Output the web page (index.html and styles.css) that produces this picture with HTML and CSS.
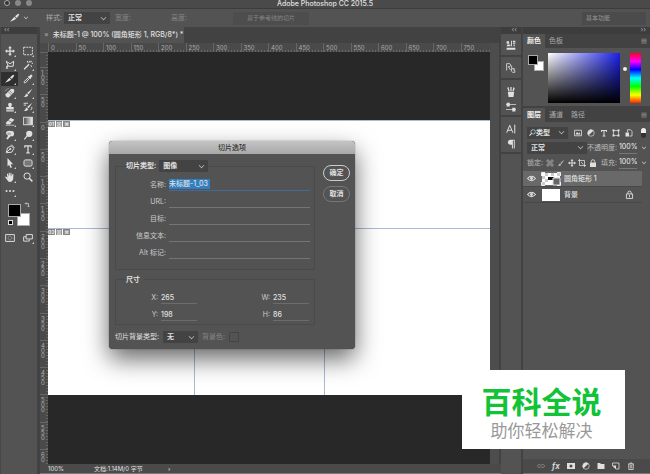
FILE: index.html
```html
<!DOCTYPE html>
<html lang="zh-CN">

<head>
  <meta charset="UTF-8">
  <meta name="viewport" content="width=device-width, initial-scale=1.0">
  <title>Adobe Photoshop CC 2015.5</title>
  <link rel="stylesheet" href="styles.css">
</head>

<body>
  <!-- 图标 -->
  <svg class="sprite" aria-hidden="true">
    <symbol id="i-move" viewBox="0 0 16 16"><path d="M8 0l3 3.500H9V7h3.500V5L16 8l-3.500 3V9H9v3.500h2L8 16l-3-3.500h2V9H3.500v2L0 8l3.500-3v2H7V3.500H5z" /></symbol>
    <symbol id="i-marquee" viewBox="0 0 16 16"><rect x="1" y="2" width="14" height="12" fill="none" stroke="currentColor" stroke-width="1.600" stroke-dasharray="3 1.500" /></symbol>
    <symbol id="i-lasso" viewBox="0 0 16 16"><path d="M2 14L5 9 2 2l6 4 6-4-1 8H6a2 2 0 1 0-1 3" fill="none" stroke="currentColor" stroke-width="1.600" /></symbol>
    <symbol id="i-wand" viewBox="0 0 16 16"><path d="M1 14L9 6l1.500 1.500-8 8zM10 1h1.500v3H10zM14 4.500h2V6h-2zM13 1l1.500 1-2 2-1-1zM6 2l1.500-1L9 4 8 5zM12 8l1 0 1.500 3-1.500 0z" /></symbol>
    <symbol id="i-slice" viewBox="0 0 16 16"><path d="M0 14L7 6l3 3-4 2.500zM8 5l5-4 2 1.500L11 8z" /></symbol>
    <symbol id="i-dropper" viewBox="0 0 16 16"><path d="M9 3l1.500 0L13 .5l2.500 2.500L13 5.500V7l-1.500 1L8 4.500z" /><path d="M9 5.500L2 12v2h2l6.500-7" fill="none" stroke="currentColor" stroke-width="1.600" /></symbol>
    <symbol id="i-heal" viewBox="0 0 16 16"><path d="M1 10l8-8q3-2 5 0t0 5l-8 8q-2 1-4-1t-1-4z" /><path d="M5 6l5 5M7 4l5 5M2 2l2 2M1 6h2" stroke="#535353" stroke-width="1" /><path d="M1 5q1-4 5-4" fill="none" stroke="currentColor" stroke-dasharray="2 1" /></symbol>
    <symbol id="i-brush" viewBox="0 0 16 16"><path d="M15 1L9 10 6.500 8zM6 9l2.500 2.500Q7 15 1 14q3-1 3-3t2-2z" /></symbol>
    <symbol id="i-stamp" viewBox="0 0 16 16"><path d="M5 4a3 3 0 0 1 6 0q0 2-1.500 4H14v4H2V8h4.500Q5 6 5 4zM2 13h12v2H2z" /></symbol>
    <symbol id="i-history" viewBox="0 0 16 16"><path d="M15 1L9 10 6.500 8zM6 9l2.500 2.500Q7 15 1 14q3-1 3-3t2-2z" /><path d="M1 2h7M1 5h4M12 13q3-2 2-5" fill="none" stroke="currentColor" stroke-width="1.500" /></symbol>
    <symbol id="i-eraser" viewBox="0 0 16 16"><path d="M1 11l8-8 6 3-7 7H3zM1 14h14v1H1z" /><path d="M5 7l6 3" stroke="#535353" /></symbol>
    <symbol id="i-gradient" viewBox="0 0 16 16"><rect x="1" y="2" width="14" height="12" fill="url(#fade)" stroke="currentColor" stroke-width="1.500" /></symbol>
    <symbol id="i-smudge" viewBox="0 0 16 16"><path d="M2 3q3-3 11-1 3 4 0 8l-4 0-5 5-2-1 3-5q-4-2-3-6z" /><path d="M5 4v4M8 4v4" stroke="#535353" /></symbol>
    <symbol id="i-dodge" viewBox="0 0 16 16"><circle cx="10" cy="6" r="5" /><path d="M7 9l-5 6" stroke="currentColor" stroke-width="2" /></symbol>
    <symbol id="i-pen" viewBox="0 0 16 16"><path d="M2 14L4 6l6-3 4 4-3 6zM10 1l5 5M3 13l5-5" fill="none" stroke="currentColor" stroke-width="1.600" /><circle cx="8.500" cy="8" r="1.500" /></symbol>
    <symbol id="i-type" viewBox="0 0 16 16"><path d="M2 2h12v4h-1.500L12 4H9v9l2 .5V15H5v-1.500L7 13V4H4l-.5 2H2z" /></symbol>
    <symbol id="i-arrow" viewBox="0 0 16 16"><path d="M4 0l9 10H9l2 5-2 1-2.500-5L4 13z" /></symbol>
    <symbol id="i-shape" viewBox="0 0 16 16"><rect x="1.500" y="3" width="13" height="10" rx="2.500" fill="#777" stroke="currentColor" stroke-width="1.500" /></symbol>
    <symbol id="i-hand" viewBox="0 0 16 16"><path d="M0 8l1.500-1L4 9 3 3l1.500-.5L6 7V1h1.500L8 7l1-6 1.500.5L10 7l2-4 1.500.5L13 12q-2 4-5 4-3 0-5-4z" /></symbol>
    <symbol id="i-zoom" viewBox="0 0 16 16"><circle cx="6.500" cy="6.500" r="5" fill="none" stroke="currentColor" stroke-width="1.600" /><path d="M10 10l5 5" stroke="currentColor" stroke-width="2.400" /></symbol>
    <symbol id="i-dots" viewBox="0 0 16 16"><circle cx="2.500" cy="8" r="1.600" /><circle cx="8" cy="8" r="1.600" /><circle cx="13.500" cy="8" r="1.600" /></symbol>
    <symbol id="i-mask" viewBox="0 0 16 16"><path d="M1 2.500h14v11H1z" fill="none" stroke="currentColor" stroke-width="1.500" /><circle cx="8" cy="8" r="3" fill="none" stroke="currentColor" stroke-dasharray="1.500 1" /></symbol>
    <symbol id="i-screen" viewBox="0 0 16 16"><path d="M5 2.500h10v7H5zM5 6H1v7h9v-3" fill="none" stroke="currentColor" stroke-width="1.500" /></symbol>
    <symbol id="i-swap" viewBox="0 0 16 16"><path d="M4 4h8v8M6 1L3 4l3 3M9 10l3 3 3-3" fill="none" stroke="currentColor" stroke-width="1.800" /></symbol>
    <symbol id="i-props" viewBox="0 0 16 16"><path d="M1 2h4v4H1zM2 7h5v3H1zM8 1h1.500v9H8zM11 1h4v2h-4zM11 4h4v2h-4zM12 7h2v3h-2zM1 12.500h14v3H1z" /></symbol>
    <symbol id="i-source" viewBox="0 0 16 16"><path d="M1 12V1h5q3 2 0 5H3M4 6l3 5M9 4v5h5M9 9q-2 5 2 6h3v-4h-3" fill="none" stroke="currentColor" stroke-width="1.300" /></symbol>
    <symbol id="i-cup" viewBox="0 0 16 16"><path d="M3 8h10l-1 8H4zM7 0h2v7H7zM2 1l2-1 2 7H4zM12 0l2 2-2 5h-2z" /></symbol>
    <symbol id="i-sliders" viewBox="0 0 16 16"><path d="M0 3h16v1.500H0zM0 11h16v1.500H0z" /><path d="M1 1h5v6H1zM10 9h5v6h-5z" /></symbol>
    <symbol id="i-char" viewBox="0 0 16 16"><path d="M1 14L6 2l5 12M3 10h6M14 1v14" fill="none" stroke="currentColor" stroke-width="1.600" /></symbol>
    <symbol id="i-para" viewBox="0 0 16 16"><path d="M7 1h7v14h-1.500V2.500h-1.500V15H9.500V9H7a4 4 0 0 1 0-8z" /></symbol>
    <symbol id="i-menu" viewBox="0 0 16 16"><path d="M1 3h14M1 6.500h14M1 10h14M1 13.500h14" stroke="currentColor" stroke-width="1.500" /></symbol>
    <symbol id="i-image" viewBox="0 0 16 16"><path d="M1 2.500h14v11H1z" fill="none" stroke="currentColor" stroke-width="1.600" /><path d="M3 11l3-5 3 3 2-2 2 4z" /></symbol>
    <symbol id="i-adjust" viewBox="0 0 16 16"><circle cx="8" cy="8" r="6.500" fill="none" stroke="currentColor" stroke-width="1.300" /><path d="M12.600 3.400A6.500 6.500 0 1 0 3.400 12.600z" /></symbol>
    <symbol id="i-path" viewBox="0 0 16 16"><path d="M3 3h10v10H3z" fill="none" stroke="currentColor" stroke-width="1.400" /><path d="M1 1h4v4H1zM11 1h4v4h-4zM1 11h4v4H1zM11 11h4v4h-4z" /></symbol>
    <symbol id="i-smart" viewBox="0 0 16 16"><path d="M5 6V1.500h6L14 4.500V14H9" fill="none" stroke="currentColor" stroke-width="1.600" /><path d="M1 7h7v8H1z" /></symbol>
    <symbol id="i-lock" viewBox="0 0 16 16"><path d="M2 7h12v9H2z" /><path d="M4.500 7V5a3.500 3.500 0 0 1 7 0v2" fill="none" stroke="currentColor" stroke-width="1.800" /></symbol>
    <symbol id="i-locked" viewBox="0 0 16 16"><path d="M2.500 7h11v8h-11zM5 7V5a3 3 0 0 1 6 0v2M8 9v4" fill="none" stroke="currentColor" stroke-width="1.600" /></symbol>
    <symbol id="i-checker" viewBox="0 0 16 16"><path d="M2 2h4v4H2zM10 2h4v4h-4zM6 6h4v4H6zM2 10h4v4H2zM10 10h4v4h-4z" fill="none" stroke="currentColor" stroke-width="1.200" /></symbol>
    <symbol id="i-artboard" viewBox="0 0 16 16"><path d="M0 3h13v13M3 0v13h13M6 6l5 5" fill="none" stroke="currentColor" stroke-width="1.500" /></symbol>
    <symbol id="i-eye" viewBox="0 0 16 16"><path d="M1 8q7-8 14 0-7 8-14 0z" fill="none" stroke="currentColor" stroke-width="1.800" /><circle cx="8" cy="8" r="2.500" /></symbol>
    <symbol id="i-link" viewBox="0 0 16 16"><path d="M7 5H4a3 3 0 0 0 0 6h3M9 5h3a3 3 0 0 1 0 6H9M5 8h6" fill="none" stroke="currentColor" stroke-width="1.500" /></symbol>
    <symbol id="i-addmask" viewBox="0 0 16 16"><path fill-rule="evenodd" d="M0 2h16v12H0zM8 5a3 3 0 1 0 0 6 3 3 0 0 0 0-6z" /></symbol>
    <symbol id="i-folder" viewBox="0 0 16 16"><path d="M1 2h5l2 2h7v10H1z" /></symbol>
    <symbol id="i-new" viewBox="0 0 16 16"><path d="M1 2h13v12H8L1 8z" fill="none" stroke="currentColor" stroke-width="1.500" /><path d="M1 7h7v7z" /></symbol>
    <symbol id="i-trash" viewBox="0 0 16 16"><path d="M2 4h12M6 4V2h4v2M3.500 4v11h9V4M6.500 6v7M9.500 6v7" fill="none" stroke="currentColor" stroke-width="1.500" /></symbol>
    <linearGradient id="fade"><stop offset="0" stop-color="#444" /><stop offset="1" stop-color="#eee" /></linearGradient>
  </svg>

  <div class="app">
    <header class="titlebar">
      <div class="lights"><i></i><i></i><i></i></div>
      <h1>Adobe Photoshop CC 2015.5</h1>
    </header>

    <!-- 工具选项栏 -->
    <div class="options">
      <svg class="icon option-tool"><use href="#i-slice" /></svg>
      <i class="chevron"></i>
      <label class="option-label" for="style">样式:</label>
      <span class="select style-select"><select id="style"><option>正常</option></select></span>
      <span class="muted option-width">宽度:</span>
      <span class="muted option-height">高度:</span>
      <button class="guide-button" disabled>基于参考线的切片</button>
      <button class="workspace-button">基本功能</button>
    </div>

    <div class="workspace">
      <!-- 工具栏 -->
      <aside class="tools">
        <div class="dock-top">‹‹</div>
        <div class="tool-grid">
          <button aria-label="移动"><svg class="icon"><use href="#i-move" /></svg></button>
          <button aria-label="选框"><svg class="icon"><use href="#i-marquee" /></svg></button>
          <button aria-label="套索"><svg class="icon"><use href="#i-lasso" /></svg></button>
          <button aria-label="魔棒"><svg class="icon"><use href="#i-wand" /></svg></button>
          <button class="active" aria-label="切片"><svg class="icon"><use href="#i-slice" /></svg></button>
          <button aria-label="吸管"><svg class="icon"><use href="#i-dropper" /></svg></button>
          <button aria-label="修复"><svg class="icon"><use href="#i-heal" /></svg></button>
          <button aria-label="画笔"><svg class="icon"><use href="#i-brush" /></svg></button>
          <button aria-label="图章"><svg class="icon"><use href="#i-stamp" /></svg></button>
          <button aria-label="历史画笔"><svg class="icon"><use href="#i-history" /></svg></button>
          <button aria-label="橡皮擦"><svg class="icon"><use href="#i-eraser" /></svg></button>
          <button aria-label="渐变"><svg class="icon"><use href="#i-gradient" /></svg></button>
          <button aria-label="涂抹"><svg class="icon"><use href="#i-smudge" /></svg></button>
          <button aria-label="减淡"><svg class="icon"><use href="#i-dodge" /></svg></button>
          <button aria-label="钢笔"><svg class="icon"><use href="#i-pen" /></svg></button>
          <button aria-label="文字"><svg class="icon"><use href="#i-type" /></svg></button>
          <button aria-label="路径选择"><svg class="icon"><use href="#i-arrow" /></svg></button>
          <button aria-label="圆角矩形"><svg class="icon"><use href="#i-shape" /></svg></button>
          <button aria-label="抓手"><svg class="icon"><use href="#i-hand" /></svg></button>
          <button class="plain" aria-label="缩放"><svg class="icon"><use href="#i-zoom" /></svg></button>
          <button aria-label="更多"><svg class="icon"><use href="#i-dots" /></svg></button>
        </div>
        <div class="colors">
          <i class="swatch back"></i>
          <i class="swatch front"></i>
          <svg class="swap"><use href="#i-swap" /></svg>
          <i class="reset"></i>
        </div>
        <div class="tool-grid modes">
          <button class="plain" aria-label="快速蒙版"><svg class="icon"><use href="#i-mask" /></svg></button>
          <button aria-label="屏幕模式"><svg class="icon"><use href="#i-screen" /></svg></button>
        </div>
      </aside>

      <!-- 文档窗口 -->
      <main class="document">
        <div class="tabs">
          <div class="doc-tab"><span class="close">×</span>未标题-1 @ 100% (圆角矩形 1, RGB/8*) *</div>
        </div>
        <div class="ruler-corner"></div>
        <div class="ruler-x">
          <span>0</span><span>50</span><span>100</span><span>150</span><span>200</span><span>250</span><span>300</span><span>350</span><span>400</span><span>450</span><span>500</span><span>550</span><span>600</span><span>650</span><span>700</span><span>750</span>
        </div>
        <div class="scroll-y"></div>
        <div class="ruler-y">
          <span class="half"></span><span>100</span><span>50</span><span>0</span><span>50</span><span>100</span><span>150</span><span>200</span><span>250</span><span>300</span><span>350</span><span>400</span><span>450</span><span>500</span><span>550</span><span class="half">60</span>
        </div>
        <div class="stage">
          <div class="canvas">
            <div class="slice wide"><span class="slice-tag"><b>01</b><b>⊠</b><b>⌘</b></span></div>
            <div class="slice"><span class="slice-tag"><b>02</b><b>⊠</b><b>⌘</b></span></div>
            <div class="slice"></div>
            <div class="slice"></div>
          </div>
        </div>
        <footer class="status"><span class="status-zoom">100%</span><span class="status-doc">文档:1.14M/0 字节</span><span>›</span></footer>
      </main>

      <!-- 折叠面板 -->
      <aside class="strip">
        <div class="dock-top right">‹‹</div>
        <div class="strip-group"><svg class="icon"><use href="#i-props" /></svg></div>
        <div class="strip-group"><svg class="icon"><use href="#i-source" /></svg></div>
        <div class="strip-group pair"><svg class="icon"><use href="#i-cup" /></svg><svg class="icon"><use href="#i-sliders" /></svg></div>
        <div class="strip-group pair"><svg class="icon"><use href="#i-char" /></svg><svg class="icon"><use href="#i-para" /></svg></div>
      </aside>

      <!-- 右侧面板 -->
      <aside class="panels">
        <div class="dock-top right">››</div>
        <div class="panel-tabs"><span class="on">颜色</span><span>色板</span><svg class="menu"><use href="#i-menu" /></svg></div>
        <div class="picker">
          <div class="picker-swatches"><i class="swatch back"></i><i class="swatch front"></i></div>
          <div class="field"></div>
          <i class="pointer"></i>
          <div class="hue"></div>
        </div>
        <div class="panel-tabs"><span class="on">图层</span><span>通道</span><span>路径</span><svg class="menu"><use href="#i-menu" /></svg></div>
        <div class="layer-row">
          <span class="select filter"><svg class="search"><use href="#i-zoom" /></svg><select aria-label="类型"><option>类型</option></select></span>
          <div class="row-icons">
            <svg class="icon"><use href="#i-image" /></svg>
            <svg class="icon"><use href="#i-adjust" /></svg>
            <svg class="icon"><use href="#i-type" /></svg>
            <svg class="icon"><use href="#i-path" /></svg>
            <svg class="icon"><use href="#i-smart" /></svg>
          </div>
          <i class="toggle"></i>
        </div>
        <div class="layer-row">
          <span class="select blend"><select aria-label="混合模式"><option>正常</option></select></span>
          <label class="value">不透明度:<input value="100%"></label>
          <i class="chevron"></i>
        </div>
        <div class="layer-row">
          <span class="lock-label">锁定:</span>
          <div class="row-icons locks">
            <svg class="icon dim"><use href="#i-checker" /></svg>
            <svg class="icon dim"><use href="#i-brush" /></svg>
            <svg class="icon"><use href="#i-move" /></svg>
            <svg class="icon"><use href="#i-artboard" /></svg>
            <svg class="icon"><use href="#i-lock" /></svg>
          </div>
          <label class="value">填充:<input value="100%"></label>
          <i class="chevron"></i>
        </div>
        <div class="layers">
          <div class="layer selected">
            <svg class="icon"><use href="#i-eye" /></svg>
            <svg class="thumb" viewBox="0 0 20 14">
              <rect x="1" y="1" width="18" height="12" fill="#fff" />
              <path d="M1 4h3v3H1zM4 1h3v3H4zM4 7h3v3H4zM10 1h3v3h-3zM16 1h3v3h-3zM1 10h3v3H1z" fill="#ccc" />
              <path d="M7 5h6v3H7z" fill="#111" />
              <path d="M12 6h7v7h-7z" fill="#666" stroke="#ddd" />
              <path d="M.5 4V.5H4M16 .5h3.500V4M.5 10v3.500H4M19.500 10v3.500H16" fill="none" stroke="#eee" />
            </svg>
            <span>圆角矩形 1</span>
          </div>
          <div class="layer">
            <svg class="icon"><use href="#i-eye" /></svg>
            <i class="thumb white"></i>
            <span>背景</span>
            <svg class="icon layer-lock"><use href="#i-locked" /></svg>
          </div>
        </div>
        <div class="panel-footer">
          <svg class="icon off"><use href="#i-link" /></svg>
          <i class="fx">fx</i>
          <svg class="icon"><use href="#i-addmask" /></svg>
          <svg class="icon"><use href="#i-adjust" /></svg>
          <svg class="icon"><use href="#i-folder" /></svg>
          <svg class="icon"><use href="#i-new" /></svg>
          <svg class="icon"><use href="#i-trash" /></svg>
        </div>
      </aside>
    </div>
  </div>

  <!-- 切片选项对话框 -->
  <form class="dialog">
    <h2>切片选项</h2>
    <div class="dialog-main">
      <div class="dialog-fields">
        <div class="group slice-group">
          <div class="group-head">
            <label for="type">切片类型:</label>
            <span class="select"><select id="type"><option>图像</option></select></span>
          </div>
          <div class="field-row"><label for="name">名称:</label><span class="line focus"><input id="name" value="未标题-1_03"></span></div>
          <div class="field-row"><label for="url">URL:</label><span class="line"><input id="url"></span></div>
          <div class="field-row"><label for="target">目标:</label><span class="line"><input id="target"></span></div>
          <div class="field-row"><label for="message">信息文本:</label><span class="line"><input id="message"></span></div>
          <div class="field-row"><label for="alt">Alt 标记:</label><span class="line"><input id="alt"></span></div>
        </div>
        <div class="group size-group">
          <h3>尺寸</h3>
          <div class="size-grid">
            <label for="x">X:</label><input id="x" value="265">
            <label for="w">W:</label><input id="w" value="235">
            <label for="y">Y:</label><input id="y" value="198">
            <label for="h">H:</label><input id="h" value="86">
          </div>
        </div>
      </div>
      <div class="dialog-buttons">
        <button type="button" class="primary">确定</button>
        <button type="button">取消</button>
      </div>
    </div>
    <div class="dialog-foot">
      <label for="bg">切片背景类型:</label>
      <span class="select"><select id="bg"><option>无</option></select></span>
      <span class="muted">背景色:</span>
      <i class="bg-color"></i>
    </div>
  </form>

  <div class="watermark">
    <strong>百科全说</strong>
    <span>助你轻松解决</span>
  </div>
</body>

</html>
```
FILE: styles.css
```css
* {
  box-sizing: border-box;
}

body {
  margin: 0;
  font: 7px/12px Inter, "Noto Sans CJK SC", sans-serif;
  color: #e0e0e0;
  background-color: #535353;
}

h1,
h2,
h3 {
  margin: 0;
  font-size: 7px;
}

button,
input,
select {
  margin: 0;
  padding: 0;
  border: 0;
  border-radius: 0;
  font: inherit;
  color: inherit;
  background: none;
  appearance: none;
  outline: none;
}

svg {
  display: block;
  flex: none;
  fill: currentColor;
}

.sprite {
  position: absolute;
  width: 0;
  height: 0;
}

.icon {
  width: 10px;
  height: 10px;
}

.muted {
  color: #858585;
}

.chevron,
.select::after {
  content: "";
  flex: none;
  width: 4px;
  height: 4px;
  margin-bottom: 2px;
  border: solid #bbb;
  border-width: 0 1px 1px 0;
  transform: rotate(45deg) scale(0.8);
}

.select {
  display: flex;
  align-items: center;
  height: 12px;
  padding: 0 4px;
  background-color: #434343;
}

.select select {
  flex: 1;
  min-width: 0;
  font-weight: 600;
}

.app {
  display: flex;
  flex-direction: column;
  min-height: 100vh;
}

/* 标题栏 */
.titlebar {
  position: relative;
  height: 9px;
  background-color: #4a4a4a;
  border-bottom: 1px solid #3c3c3c;
}

.titlebar h1 {
  text-align: center;
  font-weight: 500;
  line-height: 8px;
}

.lights {
  position: absolute;
  left: 4px;
  top: 0;
  display: flex;
  gap: 5px;
}

.lights i {
  width: 6px;
  height: 6px;
  border-radius: 50%;
  background-color: #888;
}

.lights i:first-child {
  border: 1px solid #aaa;
  background-color: #333;
}

/* 选项栏 */
.options {
  display: flex;
  align-items: center;
  height: 18px;
  padding: 0 4px 0 10px;
  background-color: #535353;
}

.option-tool {
  margin-right: 4px;
}

.option-label {
  margin-left: 18px;
  color: #aaa;
}

.style-select {
  width: 46px;
  margin-left: 2px;
}

.option-width {
  margin-left: 5px;
}

.option-height {
  margin-left: 40px;
}

.guide-button {
  width: 76px;
  height: 13px;
  margin-left: 46px;
  font-size: 6px;
  color: #858585;
  background-color: #4d4d4d;
}

.workspace-button {
  width: 64px;
  height: 13px;
  margin-left: auto;
  padding-left: 4px;
  font-size: 6px;
  text-align: left;
  color: #999;
  background-color: #4b4b4b;
}

.workspace {
  flex: 1;
  display: grid;
  grid-template-columns: 40px 1fr 22px 127px;
}

.dock-top {
  height: 7px;
  padding: 0 4px 0 3px;
  line-height: 5px;
  color: #aaa;
  background-color: #3d3d3d;
}

.dock-top.right {
  text-align: right;
}

/* 工具栏 */
.tools {
  border-left: 1px solid #484848;
  border-right: 3px solid #424242;
}

.tool-grid {
  display: grid;
  grid-template-columns: 17px 17px;
  column-gap: 1px;
  padding-top: 10px;
}

.tool-grid button {
  position: relative;
  display: flex;
  align-items: center;
  justify-content: center;
  height: 14px;
}

.tool-grid.modes {
  padding-top: 5px;
}

.tool-grid button::after {
  content: "";
  position: absolute;
  right: 2px;
  bottom: 1px;
  border: 1px solid;
  border-color: transparent #ccc #ccc transparent;
}

.tool-grid .plain::after {
  display: none;
}

.tool-grid .active {
  background-color: #2f2f2f;
}

.swatch {
  position: absolute;
  width: 13px;
  height: 13px;
  border: 1px solid #aaa;
}

.swatch.front {
  left: 0;
  top: 0;
  background-color: #000;
}

.swatch.back {
  right: 0;
  bottom: 0;
  background-color: #fff;
}

.colors {
  position: relative;
  width: 22px;
  height: 22px;
  margin: 6px 0 0 7px;
}

.swap {
  position: absolute;
  right: 0;
  top: -2px;
  width: 6px;
  height: 6px;
}

.reset {
  position: absolute;
  left: 0;
  bottom: 1px;
  width: 5px;
  height: 5px;
  border: 1px solid #ddd;
  background-color: #000;
}

/* 文档 */
.document {
  display: grid;
  grid-template-columns: 8px 1fr 11px;
  grid-template-rows: 16px 9px 1fr 10px;
}

.tabs {
  grid-column: 1 / -1;
  background-color: #424242;
}

.doc-tab {
  width: 144px;
  padding-left: 4px;
  line-height: 16px;
  font-weight: 500;
  white-space: nowrap;
  background-color: #535353;
}

.close {
  margin-right: 4px;
  color: #aaa;
}

.ruler-corner,
.ruler-x,
.ruler-y {
  color: #aaa;
  font-size: 6px;
  background-color: #4a4a4a;
}

.ruler-x {
  display: flex;
  padding-right: 2px;
  background-image: repeating-linear-gradient(90deg, #666 0 1px, transparent 1px 3px);
  background-size: 100% 2px;
  background-position: bottom;
  background-repeat: no-repeat;
}

.ruler-x span {
  flex: 1;
  padding-left: 2px;
  line-height: 9px;
  border-left: 1px solid #666;
}

.scroll-y {
  grid-row: 2 / 4;
  grid-column: 3;
  background-color: #4d4d4d;
  border-right: 2px solid #424242;
}

.ruler-y {
  display: flex;
  flex-direction: column;
  background-image: repeating-linear-gradient(#666 0 1px, transparent 1px 3px);
  background-size: 2px 100%;
  background-position: right;
  background-repeat: no-repeat;
}

.ruler-y span {
  flex: 1 1 0;
  min-height: 0;
  padding: 2px 3px 0 1px;
  line-height: 5px;
  word-break: break-all;
  border-top: 1px solid #666;
}

.ruler-y .half {
  flex-grow: 0.5;
}

.stage {
  padding-top: 68px;
  background-color: #282828;
}

.canvas {
  display: grid;
  grid-template-columns: 147px 130px 1fr;
  grid-template-rows: 108px 167px;
  background-color: #fff;
}

.slice {
  border-top: 1px solid #aabbd4;
  border-right: 1px solid #aabbd4;
}

.slice:last-child,
.slice.wide {
  border-right: 0;
}

.slice.wide {
  grid-column: 1 / -1;
}

.slice-tag {
  display: flex;
  gap: 1px;
  width: 22px;
}

.slice-tag b {
  width: 7px;
  height: 6px;
  text-align: center;
  font-size: 5px;
  line-height: 6px;
  color: #eee;
  background-color: #858585;
}

.status {
  grid-column: 1 / -1;
  display: flex;
  padding-left: 8px;
  line-height: 9px;
  font-size: 6px;
  background-color: #4a4a4a;
  border-bottom: 1px solid #777;
}

.status-zoom {
  width: 46px;
}

.status-doc {
  width: 74px;
}

/* 折叠面板 */
.strip {
  border-right: 2px solid #424242;
}

.strip-group {
  display: flex;
  flex-direction: column;
  align-items: center;
  gap: 5px;
  padding: 6px 0 5px;
  border-bottom: 2px solid #424242;
}

.strip-group.pair {
  padding: 7px 0 3px;
}

/* 右侧面板 */
.panels {
  display: flex;
  flex-direction: column;
}

.panel-tabs {
  display: flex;
  align-items: center;
  padding-right: 3px;
  line-height: 14px;
  color: #aaa;
  background-color: #424242;
}

.panel-tabs span {
  padding: 0 4px;
}

.panel-tabs .on {
  font-weight: 600;
  color: #eee;
  background-color: #535353;
}

.menu {
  width: 6px;
  height: 6px;
  margin-left: auto;
}

.picker {
  display: flex;
  padding: 5px 9px 3px 5px;
  border-bottom: 2px solid #424242;
}

.picker-swatches {
  position: relative;
  width: 16px;
  height: 16px;
  margin: 2px 4px 0 0;
}

.picker-swatches .swatch {
  width: 10px;
  height: 10px;
}

.field {
  flex: 1;
  height: 50px;
  background-image: linear-gradient(transparent, #000), linear-gradient(90deg, #fff, #1a20e8);
}

.pointer {
  width: 4px;
  height: 4px;
  margin: 14px 3px 0;
  border-radius: 50%;
  background-color: #eee;
}

.hue {
  width: 11px;
  height: 50px;
  background-image: linear-gradient(#f02, #f0f 17%, #00f 33%, #0ff 50%, #0f0 67%, #ff0 84%, #f20);
}

.layer-row {
  display: flex;
  align-items: center;
  height: 15px;
  padding: 0 4px;
}

.panel-tabs + .layer-row {
  height: 18px;
  padding-top: 3px;
}

.filter {
  width: 41px;
  padding-left: 2px;
}

.search {
  width: 7px;
  height: 7px;
  transform: scaleX(-1);
}

.row-icons {
  flex: 1;
  display: flex;
  justify-content: space-between;
  padding: 0 8px 0 6px;
}

.row-icons .icon {
  width: 8px;
  height: 8px;
}

.row-icons.locks {
  padding: 0 4px 0 3px;
}

.lock-label {
  color: #bbb;
}

.dim {
  opacity: 0.7;
}

.toggle {
  width: 5px;
  height: 10px;
  border-radius: 3px;
  background-image: linear-gradient(#eee 0 5px, #333 5px);
}

.blend {
  width: 61px;
}

.value {
  display: flex;
  margin: 0 5px 0 auto;
  color: #bbb;
  white-space: nowrap;
}

.value input {
  width: 18px;
  height: 12px;
  margin-left: 2px;
  color: #eee;
  border-bottom: 1px solid #777;
}

.layers {
  flex: 1;
  padding: 1px 8px 0 0;
}

.layer {
  display: flex;
  align-items: center;
  height: 16px;
  padding: 0 8px 0 4px;
  font-weight: 500;
  border-bottom: 1px solid #484848;
}

.layer .icon {
  width: 9px;
  height: 9px;
}

.layer.selected {
  background-color: #696969;
}

.thumb {
  width: 20px;
  height: 14px;
  margin: 0 3px 0 5px;
}

.thumb.white {
  width: 18px;
  height: 12px;
  margin: 0 4px 0 6px;
  background-color: #fff;
}

.layer-lock {
  margin-left: auto;
}

.panel-footer {
  display: flex;
  align-items: center;
  justify-content: space-between;
  height: 15px;
  padding: 0 15px 0 14px;
  background-color: #4a4a4a;
  border-bottom: 1px solid #777;
}

.panel-footer .icon {
  width: 8px;
  height: 8px;
}

.panel-footer .off {
  opacity: 0.4;
}

.fx {
  font-size: 8px;
  font-weight: 600;
}

/* 对话框 */
.dialog {
  position: absolute;
  left: 109px;
  top: 141px;
  width: 246px;
  padding-bottom: 6px;
  border-radius: 4px;
  background-color: #535353;
  box-shadow: 0 10px 24px rgba(0, 0, 0, 0.6), 0 0 1px #333;
}

.dialog h2 {
  text-align: center;
  line-height: 13px;
  font-weight: 500;
  color: #333;
  border-radius: 4px 4px 0 0;
  background-image: linear-gradient(#c4c4c4, #a8a8a8);
}

.dialog-main {
  display: flex;
  padding: 6px 5px 0 6px;
}

.dialog-fields {
  flex: 1;
}

.group {
  margin-top: 6px;
  border: 1px solid #4a4a4a;
}

.slice-group {
  height: 104px;
}

.group-head {
  display: flex;
  align-items: center;
  gap: 3px;
  margin: -7px 0 7px 10px;
  font-weight: 600;
}

.group-head label {
  background-color: #535353;
}

.group-head .select {
  width: 49px;
}

.field-row {
  display: flex;
  gap: 3px;
  height: 17px;
  padding-right: 4px;
}

.field-row label {
  width: 50px;
  text-align: right;
  color: #ccc;
}

.line {
  flex: 1;
  display: flex;
  height: 12px;
  border-bottom: 1px solid #747474;
}

.line input {
  width: 100%;
}

.line.focus {
  border-color: #46699a;
}

.line.focus input {
  width: 41px;
  height: 10px;
  font-weight: 500;
  background-color: #2f7fc4;
}

.size-group {
  height: 46px;
  margin-top: 9px;
}

.size-group h3 {
  width: 18px;
  margin: -6px 0 6px 10px;
  background-color: #535353;
}

.size-grid {
  display: grid;
  grid-template-columns: 42px 36px 1fr 36px;
  gap: 5px 3px;
  padding-right: 5px;
}

.size-grid label {
  text-align: right;
  color: #ccc;
}

.size-grid input {
  width: 36px;
  height: 12px;
  font-weight: 500;
  border-bottom: 1px solid #6c6c6c;
}

.dialog-buttons {
  display: flex;
  flex-direction: column;
  gap: 5px;
  width: 27px;
  margin: 5px 0 0 8px;
}

.dialog-buttons button {
  height: 16px;
  font-weight: 600;
  border: 1px solid #777;
  border-radius: 8px;
}

.dialog-buttons .primary {
  border-color: #ccc;
}

.dialog-foot {
  display: flex;
  align-items: center;
  gap: 4px;
  margin-top: 6px;
  padding-left: 6px;
}

.dialog-foot .select {
  width: 35px;
}

.bg-color {
  width: 10px;
  height: 10px;
  border: 1px solid #454545;
}

/* 水印 */
.watermark {
  position: fixed;
  right: 25px;
  bottom: 25px;
  display: flex;
  flex-direction: column;
  align-items: center;
  width: 163px;
  height: 79px;
  padding: 14px 4px 0 0;
  background-color: #fff;
}

.watermark strong {
  font-size: 30px;
  line-height: 36px;
  color: #12c237;
}

.watermark span {
  font-size: 17px;
  line-height: 22px;
  color: #999;
}
```
